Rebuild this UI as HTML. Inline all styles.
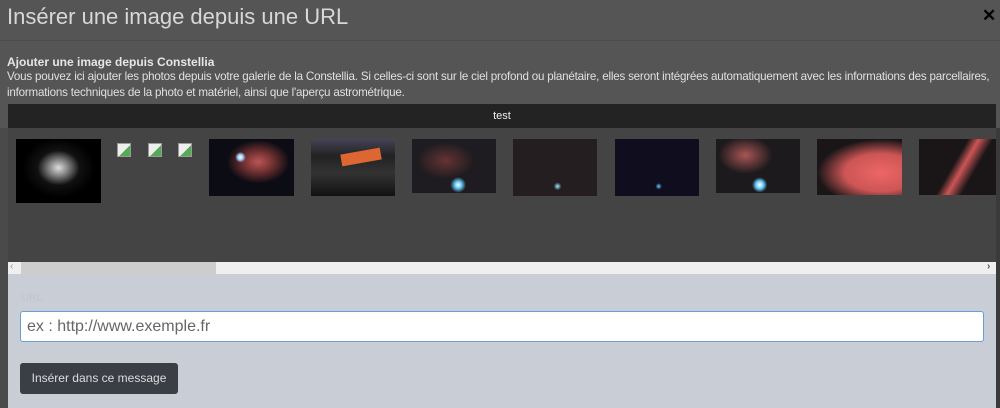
<!DOCTYPE html>
<html><head><meta charset="utf-8"><style>
*{margin:0;padding:0;box-sizing:border-box}
body{width:1000px;height:408px;background:#555;font-family:"Liberation Sans",sans-serif;position:relative;overflow:hidden}
.abs{position:absolute}
.title{left:7px;top:4px;font-size:22px;color:#d8d8d8;white-space:nowrap}
.close{left:982px;top:6px;font-size:17px;color:#000;font-weight:bold}
.sep{left:0;top:40px;width:1000px;height:1px;background:#4c4c4c}
.h{left:7px;top:55px;font-size:12px;font-weight:bold;color:#e6e6e6}
.d{left:7px;font-size:11.6px;color:#e0e0e0;white-space:nowrap;letter-spacing:-0.2px}
.bar{left:8px;top:104px;width:988px;height:24px;background:#232323;color:#eee;font-size:11px;text-align:center;line-height:24px}
.gal{left:8px;top:128px;width:988px;height:134px;background:#444}
.left{left:0;top:128px;width:8px;height:280px;background:#4a4a4a}
.right{left:996px;top:128px;width:4px;height:280px;background:#3a3a3a}
.sb{left:8px;top:262px;width:988px;height:12px;background:#efefef}
.thumb{left:21px;top:262px;width:195px;height:12px;background:#cdcdcd}
.form{left:8px;top:274px;width:988px;height:134px;background:#c9cdd5}
.img{position:absolute;top:139px}
.inp{left:20px;top:311px;width:964px;height:31px;background:#fff;border:1px solid #6a9fd6;border-radius:3px;font-size:16px;color:#666;line-height:29px;padding-left:6px}
.btn{left:20px;top:363px;width:158px;height:31px;background:#3b3e45;border-radius:3px;color:#ddd;font-size:12px;text-align:center;line-height:31px}
.bi{position:absolute;top:143px;width:14px;height:14px;background:linear-gradient(135deg,#eee 55%,#5a5 55%);border:1px solid #999}
</style></head><body>
<div class="abs title">Insérer une image depuis une URL</div>
<div class="abs close">✕</div>
<div class="abs sep"></div>
<div class="abs h">Ajouter une image depuis Constellia</div>
<div class="abs d" style="top:70px">Vous pouvez ici ajouter les photos depuis votre galerie de la Constellia. Si celles-ci sont sur le ciel profond ou planétaire, elles seront intégrées automatiquement avec les informations des parcellaires,</div>
<div class="abs d" style="top:86px">informations techniques de la photo et matériel, ainsi que l'aperçu astrométrique.</div>
<div class="abs bar">test</div>
<div class="abs left"></div>
<div class="abs right"></div>
<div class="abs gal"></div>
<div class="img" style="left:16px;width:85px;height:64px;background:radial-gradient(ellipse at 50% 45%,#ddd 0,#888 15%,#111 35%,#000 60%)"></div>
<div class="bi" style="left:117px"></div>
<div class="bi" style="left:148px"></div>
<div class="bi" style="left:178px"></div>
<div class="img" style="left:209px;width:85px;height:57px;background:radial-gradient(circle at 37% 32%,#fff 0,#9cf 4%,transparent 8%),radial-gradient(ellipse at 58% 40%,#b55 0,#733 20%,transparent 45%),#0b0c14"></div>
<div class="img" style="left:311px;width:84px;height:57px;background:linear-gradient(#445 0,#222 30%,#333 60%,#111);"><div style="position:absolute;left:30px;top:12px;width:40px;height:12px;background:#d63;transform:rotate(-10deg)"></div></div>
<div class="img" style="left:412px;width:84px;height:54px;background:radial-gradient(circle at 55% 85%,#fff 0,#6cf 5%,transparent 12%),radial-gradient(ellipse at 40% 40%,#633 0,transparent 40%),#1e1c20"></div>
<div class="img" style="left:513px;width:84px;height:57px;background:radial-gradient(circle at 53% 83%,#9ef 0,transparent 6%),#241e20"></div>
<div class="img" style="left:615px;width:84px;height:57px;background:radial-gradient(circle at 52% 83%,#6cf 0,transparent 5%),#0f0d1e"></div>
<div class="img" style="left:716px;width:84px;height:54px;background:radial-gradient(circle at 52% 85%,#fff 0,#6cf 6%,transparent 12%),radial-gradient(ellipse at 35% 30%,#a55 0,transparent 35%),#1c1a1c"></div>
<div class="img" style="left:817px;width:85px;height:56px;background:radial-gradient(ellipse at 75% 60%,#e66 0,#c55 40%,transparent 70%),#1a1618"></div>
<div class="img" style="left:919px;width:77px;height:56px;background:linear-gradient(120deg,#1a1618 45%,#c55 55%,#1a1618 68%)"></div>
<div class="abs sb"></div>
<div class="abs thumb"></div>
<div class="abs" style="left:10px;top:261px;font-size:10px;color:#999">&lsaquo;</div>
<div class="abs" style="left:987px;top:261px;font-size:10px;color:#555;font-weight:bold">&rsaquo;</div>
<div class="abs form"></div>
<div class="abs" style="left:21px;top:292px;font-size:11px;color:#c0c4cc">URL</div>
<div class="abs inp">ex : http://www.exemple.fr</div>
<div class="abs btn">Insérer dans ce message</div>
</body></html>
